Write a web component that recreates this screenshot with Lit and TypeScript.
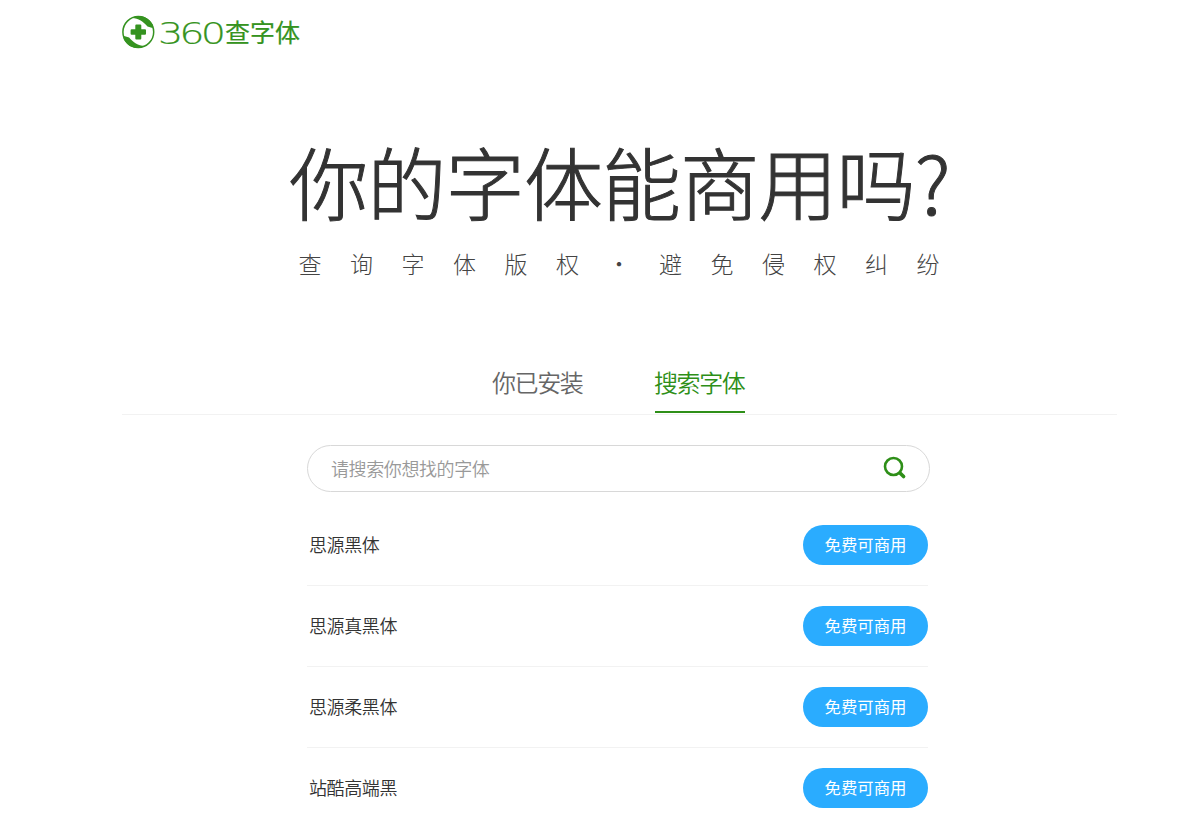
import { LitElement, html, css } from 'lit';
import { customElement, state } from 'lit/decorators.js';
import { classMap } from 'lit/directives/class-map.js';
import { map } from 'lit/directives/map.js';

@customElement('font-logo')
export class FontLogo extends LitElement {
  static styles = css`
    :host {
      display: block;
      width: 182px;
      height: 40px;
    }
    svg {
      display: block;
    }
    .digits {
      font: 200 30px 'DejaVu Sans', sans-serif;
      letter-spacing: -3px;
      stroke: #359320;
      stroke-width: 0.2px;
    }
    .name {
      font: 400 25px 'Noto Sans CJK SC', sans-serif;
      stroke: #359320;
      stroke-width: 0.2px;
    }
  `;

  render() {
    return html`
      <svg width="182" height="40" viewBox="0 0 182 40" fill="#359320">
        <circle cx="16.3" cy="20" r="15.4" fill="none" stroke="#359320" stroke-width="1.5" />
        <path d="M10 6C16 2 26 3.5 31 13l-.5 3-5-1.5C21.5 9.5 16.5 6.5 10 6z" />
        <path d="M22.6 34C16.6 38 6.6 36.5 1.600 27l.5-3 5 1.5C11.1 30.5 16.1 33.5 22.6 34z" />
        <path d="M14.3 12.6h4a1 1 0 0 1 1 1v3.7H23a1 1 0 0 1 1 1v3.4a1 1 0 0 1-1 1h-3.7v3.7a1 1 0 0 1-1 1h-4a1 1 0 0 1-1-1v-3.7H9.6a1 1 0 0 1-1-1v-3.4a1 1 0 0 1 1-1h3.7v-3.7a1 1 0 0 1 1-1z" />
        <text class="digits" x="36" y="31.5" textLength="64" lengthAdjust="spacingAndGlyphs">360</text>
        <text class="name" x="103" y="29.5">查字体</text>
      </svg>
    `;
  }
}

@customElement('app-root')
export class AppRoot extends LitElement {
  @state() _tab = 1;

  _tabs = ['你已安装', '搜索字体'];
  _slogan = [...'查询字体版权·避免侵权纠纷'];
  _fonts = [
    { name: '思源黑体', license: '免费可商用' },
    { name: '思源真黑体', license: '免费可商用' },
    { name: '思源柔黑体', license: '免费可商用' },
    { name: '站酷高端黑', license: '免费可商用' },
  ];

  static styles = css`
    :host {
      display: block;
      height: 829px;
      overflow: hidden;
      background: #fff;
      color: #333;
      font-family: 'Noto Sans CJK SC', sans-serif;
      font-weight: 350;
    }
    .page {
      width: 995px;
      margin-left: 122px;
      display: flex;
      flex-direction: column;
      align-items: center;
    }
    font-logo {
      align-self: flex-start;
      padding-top: 12px;
    }
    h1 {
      margin: 79px 0 0;
      height: 100px;
      line-height: 100px;
      font-size: 79px;
      font-weight: 300;
      letter-spacing: -0.8px;
      white-space: nowrap;
      -webkit-text-stroke: 1px #333;
    }
    .slogan {
      display: flex;
      height: 30px;
      margin-top: 17px;
      padding-right: 1px;
      line-height: 30px;
      font-size: 23px;
      font-weight: 300;
      color: #444;
    }
    .slogan span {
      width: 51.5px;
      text-align: center;
    }
    .tabs {
      box-sizing: border-box;
      display: flex;
      justify-content: center;
      gap: 72px;
      width: 100%;
      height: 60px;
      margin-top: 77px;
      padding-right: 1px;
      border-bottom: 1px solid #f2f2f2;
    }
    .tab {
      box-sizing: border-box;
      width: 90px;
      height: 58px;
      padding: 0 0 2px;
      border: 0;
      border-bottom: 2px solid transparent;
      background: none;
      color: #666;
      font: inherit;
      font-size: 24px;
      line-height: 54px;
      letter-spacing: -1.4px;
      text-align: left;
      text-indent: -1px;
      white-space: nowrap;
      cursor: pointer;
    }
    .tab.active {
      color: #2e8f18;
      border-bottom-color: #2e8f18;
    }
    .search {
      box-sizing: border-box;
      display: flex;
      align-items: center;
      width: 623px;
      height: 47px;
      margin: 30px 2px 0 0;
      padding: 0 22px 2px 23px;
      border: 1px solid #d8d8d8;
      border-radius: 24px;
    }
    input {
      flex: 1;
      min-width: 0;
      padding: 0;
      border: 0;
      outline: 0;
      background: none;
      font: inherit;
      font-size: 18px;
      letter-spacing: -0.4px;
    }
    input::placeholder {
      color: #999;
    }
    ul {
      width: 621px;
      margin: 13px 4px 0 0;
      padding: 0;
      list-style: none;
    }
    li {
      display: flex;
      align-items: center;
      justify-content: space-between;
      height: 80px;
      padding-left: 2px;
      border-bottom: 1px solid #f2f2f2;
      font-size: 18px;
      letter-spacing: -0.4px;
    }
    li:last-child {
      border-bottom: none;
    }
    .name {
      padding-bottom: 2px;
    }
    .license {
      width: 125px;
      height: 40px;
      border-radius: 20px;
      background: #2aacff;
      color: #fff;
      font-size: 16.4px;
      font-weight: 400;
      line-height: 38px;
      letter-spacing: 0;
      text-align: center;
    }
  `;

  render() {
    return html`
      <div class="page">
        <font-logo></font-logo>
        <h1>你的字体能商用吗?</h1>
        <div class="slogan">${map(this._slogan, (char) => html`<span>${char}</span>`)}</div>
        <div class="tabs">
          ${map(this._tabs, (label, index) => html`
            <button
              class=${classMap({ tab: true, active: index === this._tab })}
              @click=${() => { this._tab = index; }}
            >${label}</button>
          `)}
        </div>
        <div class="search">
          <input type="text" placeholder="请搜索你想找的字体">
          <svg width="24" height="24" viewBox="0 0 24 24" fill="none" stroke="#2e8f18">
            <circle cx="10.5" cy="10.5" r="8.5" stroke-width="2.6" />
            <path d="M17 17l3.6 3.6" stroke-width="3.6" stroke-linecap="round" />
          </svg>
        </div>
        <ul>
          ${map(this._fonts, (font) => html`
            <li>
              <span class="name">${font.name}</span>
              <span class="license">${font.license}</span>
            </li>
          `)}
        </ul>
      </div>
    `;
  }
}
